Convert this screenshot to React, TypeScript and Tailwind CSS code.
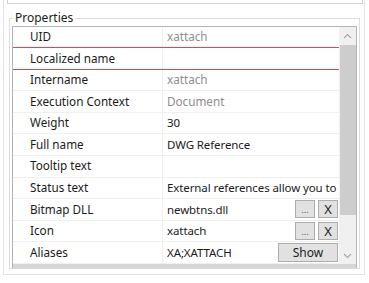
import React from 'react';

type Row = {
  label: string;
  value: string;
  gray?: boolean;
  red?: boolean;
  buttons?: 'dx' | 'show';
};

const rows: Row[] = [
  { label: 'UID', value: 'xattach', gray: true, red: true },
  { label: 'Localized name', value: '', red: true },
  { label: 'Intername', value: 'xattach', gray: true },
  { label: 'Execution Context', value: 'Document', gray: true },
  { label: 'Weight', value: '30' },
  { label: 'Full name', value: 'DWG Reference' },
  { label: 'Tooltip text', value: '' },
  { label: 'Status text', value: 'External references allow you to' },
  { label: 'Bitmap DLL', value: 'newbtns.dll', buttons: 'dx' },
  { label: 'Icon', value: 'xattach', buttons: 'dx' },
  { label: 'Aliases', value: 'XA;XATTACH', buttons: 'show' },
];

function Chevron({ up }: { up?: boolean }) {
  return (
    <svg width="9" height="6" viewBox="0 0 9 6">
      <polyline
        points={up ? '1,5 4.5,1.5 8,5' : '1,1 4.5,4.5 8,1'}
        fill="none"
        stroke="#a6a6a6"
        strokeWidth="1.1"
      />
    </svg>
  );
}

export default function App() {
  return (
    <div
      className="w-[369px] h-[283px] bg-white overflow-hidden text-[11.7px] text-[#1b1b1b]"
      style={{ fontFamily: '"Noto Sans", "Open Sans", sans-serif' }}
    >
      <div className="ml-[3px] w-[362px] h-[275px] border-l border-r border-b border-[#e3e3e3]">
        <div className="ml-[3px] w-[356px] h-[4px] border-l border-r border-b border-[#cfcfcf]" />
        <div className="relative mt-[14px] ml-[5px] w-[351px] h-[251px] border border-[#dcdcdc] pt-[7px] pl-[2px]">
          <span className="absolute left-[3px] -top-[9px] bg-white px-[2px] leading-[16px] text-[12px] text-[#1b1b1b]">
            Properties
          </span>
          <div className="w-[345px] h-[242px] border-l border-t border-r border-[#b4b4b4] flex flex-col">
            <div className="flex flex-1 min-h-0">
              <div className="flex flex-col w-[326px]">
                {rows.map((r, i) => (
                  <div key={r.label} className={i === 0 ? 'flex flex-col h-[21px]' : 'flex flex-col h-[21.6px]'}>
                    <div className="flex flex-1 min-h-0">
                      <div className="w-[150px] shrink-0 border-r border-[#f0f0f0] pl-[17px] flex items-center whitespace-nowrap overflow-hidden">
                        {r.label}
                      </div>
                      <div className="flex-1 min-w-0 flex items-center pl-[4px] whitespace-nowrap overflow-hidden">
                        <span
                          className={
                            r.gray
                              ? 'flex-1 min-w-0 overflow-hidden text-[#8e8e8e]'
                              : 'flex-1 min-w-0 overflow-hidden text-[11.5px] tracking-[-0.1px]'
                          }
                        >
                          {r.value}
                        </span>
                        {r.buttons === 'dx' && (
                          <div className="flex gap-[3px] mr-[1px] shrink-0">
                            <div className="w-[20px] h-[18px] bg-[#e1e1e1] border border-[#adadad] flex items-end justify-center pb-[3px] text-[9px] leading-none text-[#555]">
                              ...
                            </div>
                            <div className="w-[20px] h-[18px] bg-[#e1e1e1] border border-[#adadad] flex items-center justify-center text-[13px] leading-none text-[#222]">
                              X
                            </div>
                          </div>
                        )}
                        {r.buttons === 'show' && (
                          <div className="w-[60px] h-[19px] mr-[1px] shrink-0 bg-[#e1e1e1] border border-[#adadad] flex items-center justify-center leading-none text-[12px] text-[#222]">
                            Show
                          </div>
                        )}
                      </div>
                    </div>
                    {r.red ? (
                      <div className="h-[1px] shrink-0 bg-[#e8414f]" />
                    ) : (
                      <div className="h-[1px] shrink-0 bg-[#f0f0f0]" />
                    )}
                  </div>
                ))}
              </div>
              <div className="w-[17px] bg-[#f0f0f0] flex flex-col">
                <div className="h-[17px] flex items-center justify-center">
                  <Chevron up />
                </div>
                <div className="ml-[1px] mt-[1px] h-[170px] bg-[#cdcdcd]" />
                <div className="flex-1" />
                <div className="h-[17px] flex items-center justify-center">
                  <Chevron />
                </div>
              </div>
            </div>
            <div className="h-[4px] bg-[#d6d6d6]" />
          </div>
        </div>
      </div>
    </div>
  );
}
